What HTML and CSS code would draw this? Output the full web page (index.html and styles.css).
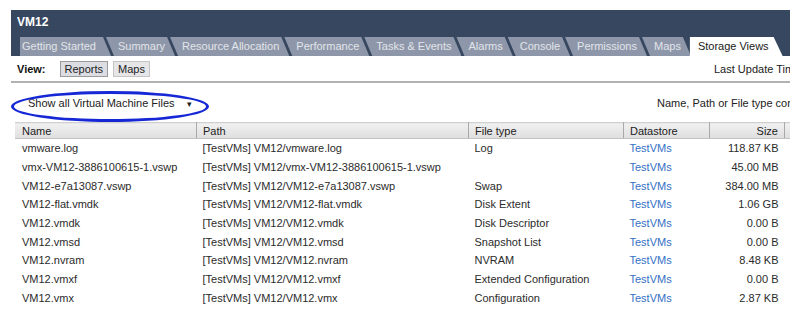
FILE: index.html
```html
<!DOCTYPE html>
<html lang="en">
<head>
  <meta charset="UTF-8" />
  <title>VM12 - Storage Views</title>
  <link rel="stylesheet" href="styles.css">
</head>
<body>
  <div class="panel">
    <div class="titlebar">
      <div class="title">VM12</div>
      <div class="tabs">
        <span class="tab first">Getting Started</span>
        <span class="tab">Summary</span>
        <span class="tab">Resource Allocation</span>
        <span class="tab">Performance</span>
        <span class="tab">Tasks &amp; Events</span>
        <span class="tab">Alarms</span>
        <span class="tab">Console</span>
        <span class="tab">Permissions</span>
        <span class="tab">Maps</span>
        <span class="tab active">Storage Views</span>
      </div>
    </div>

    <div class="toolbar">
      <span class="view-label">View:</span>
      <span class="view-btn pressed">Reports</span>
      <span class="view-btn">Maps</span>
      <span class="last-update">Last Update Time: 5/12/2009 10:41:22 AM</span>
    </div>

    <div class="filterbar">
      <div class="select">Show all Virtual Machine Files <span class="caret">&#9662;</span></div>
      <div class="highlight"></div>
      <span class="search-hint">Name, Path or File type contains:</span>
    </div>

    <table class="files">
      <thead>
        <tr>
          <th class="c-name">Name</th>
          <th class="c-path">Path</th>
          <th class="c-type">File type</th>
          <th class="c-ds">Datastore</th>
          <th class="c-size">Size</th>
          <th class="c-end"></th>
        </tr>
      </thead>
      <tbody>
        <tr><td>vmware.log</td><td>[TestVMs] VM12/vmware.log</td><td>Log</td><td class="ds">TestVMs</td><td class="size">118.87 KB</td><td></td></tr>
        <tr><td>vmx-VM12-3886100615-1.vswp</td><td>[TestVMs] VM12/vmx-VM12-3886100615-1.vswp</td><td></td><td class="ds">TestVMs</td><td class="size">45.00 MB</td><td></td></tr>
        <tr><td>VM12-e7a13087.vswp</td><td>[TestVMs] VM12/VM12-e7a13087.vswp</td><td>Swap</td><td class="ds">TestVMs</td><td class="size">384.00 MB</td><td></td></tr>
        <tr><td>VM12-flat.vmdk</td><td>[TestVMs] VM12/VM12-flat.vmdk</td><td>Disk Extent</td><td class="ds">TestVMs</td><td class="size">1.06 GB</td><td></td></tr>
        <tr><td>VM12.vmdk</td><td>[TestVMs] VM12/VM12.vmdk</td><td>Disk Descriptor</td><td class="ds">TestVMs</td><td class="size">0.00 B</td><td></td></tr>
        <tr><td>VM12.vmsd</td><td>[TestVMs] VM12/VM12.vmsd</td><td>Snapshot List</td><td class="ds">TestVMs</td><td class="size">0.00 B</td><td></td></tr>
        <tr><td>VM12.nvram</td><td>[TestVMs] VM12/VM12.nvram</td><td>NVRAM</td><td class="ds">TestVMs</td><td class="size">8.48 KB</td><td></td></tr>
        <tr><td>VM12.vmxf</td><td>[TestVMs] VM12/VM12.vmxf</td><td>Extended Configuration</td><td class="ds">TestVMs</td><td class="size">0.00 B</td><td></td></tr>
        <tr><td>VM12.vmx</td><td>[TestVMs] VM12/VM12.vmx</td><td>Configuration</td><td class="ds">TestVMs</td><td class="size">2.87 KB</td><td></td></tr>
      </tbody>
    </table>
  </div>
</body>
</html>
```

FILE: styles.css
```css
body {
  margin: 0;
  background: #fff;
  font-family: 'Liberation Sans', Arial, sans-serif;
  font-size: 11px;
  color: #2b2b2b;
}

.panel {
  margin: 10px 0 0 11px;
  width: 779px;
  overflow: hidden;
}

/* dark header with title and tabs */
.titlebar {
  background: #36475f;
  padding-left: 9px;
}

.title {
  height: 27px;
  line-height: 25px;
  margin-left: -3px;
  color: #fff;
  font-size: 12px;
  font-weight: bold;
}

.tabs {
  display: flex;
  height: 19px;
}

.tab {
  background: #8e97a9;
  color: #e2e5ea;
  line-height: 19px;
  padding: 0 10px 0 12px;
  margin-left: -5px;
  white-space: nowrap;
  clip-path: polygon(0 0, calc(100% - 8px) 0, 100% 100%, 8px 100%);
}

.tab.first {
  margin-left: 0;
  padding: 0 15px 0 2px;
  clip-path: polygon(0 0, calc(100% - 8px) 0, 100% 100%, 0 100%);
}

.tab.active {
  background: #fff;
  color: #1a1a1a;
  padding-right: 14px;
  clip-path: polygon(4px 0, calc(100% - 9px) 0, 100% 100%, 4px 100%);
}

/* view switch row */
.toolbar {
  display: flex;
  align-items: center;
  height: 25px;
  padding-left: 6px;
  border-bottom: 2px solid #b2b2b2;
}

.view-label {
  font-weight: bold;
  color: #111;
  margin-right: 14px;
}

.view-btn {
  border: 1px solid #c4c4c4;
  background: #e6e6e8;
  padding: 0 4px;
  line-height: 14px;
  margin-right: 5px;
  color: #222;
}

.view-btn.pressed {
  border-color: #9a9a9a;
  background: #dcdde2;
}

.last-update {
  margin-left: auto;
  width: 76px;
  overflow: hidden;
  white-space: nowrap;
  color: #222;
}

/* filter row */
.filterbar {
  position: relative;
  display: flex;
  align-items: center;
  height: 39px;
}

.select {
  padding-left: 17px;
  color: #222;
  white-space: nowrap;
}

.caret {
  margin-left: 9px;
  font-size: 9px;
}

.highlight {
  position: absolute;
  left: 0;
  top: 8px;
  width: 192px;
  height: 25px;
  border: 3px solid #1628d6;
  border-radius: 50%;
}

.search-hint {
  margin-left: auto;
  width: 133px;
  overflow: hidden;
  white-space: nowrap;
  color: #222;
}

/* files table */
.files {
  border-collapse: collapse;
  margin-left: 4px;
  table-layout: fixed;
  width: 800px;
}

.files th {
  height: 15px;
  padding: 0 6px;
  text-align: left;
  font-weight: normal;
  color: #222;
  background: linear-gradient(#f1f1f1, #dedede);
  border-top: 1px solid #d0d0d0;
  border-bottom: 1px solid #c2c2c2;
  border-right: 1px solid #a9a9a9;
}

.files td {
  height: 18.7px;
  padding: 0 6px;
  white-space: nowrap;
}

.c-name { width: 168px; }
.c-path { width: 259px; }
.c-type { width: 142px; }
.c-ds { width: 73px; }
.c-size { width: 62px; }
.c-end { width: 60px; }

.files th.c-size,
.files td.size {
  text-align: right;
}

.files th.c-name,
.files tbody td:first-child {
  padding-left: 7px;
}

.files td.ds {
  color: #3570c6;
}
```
